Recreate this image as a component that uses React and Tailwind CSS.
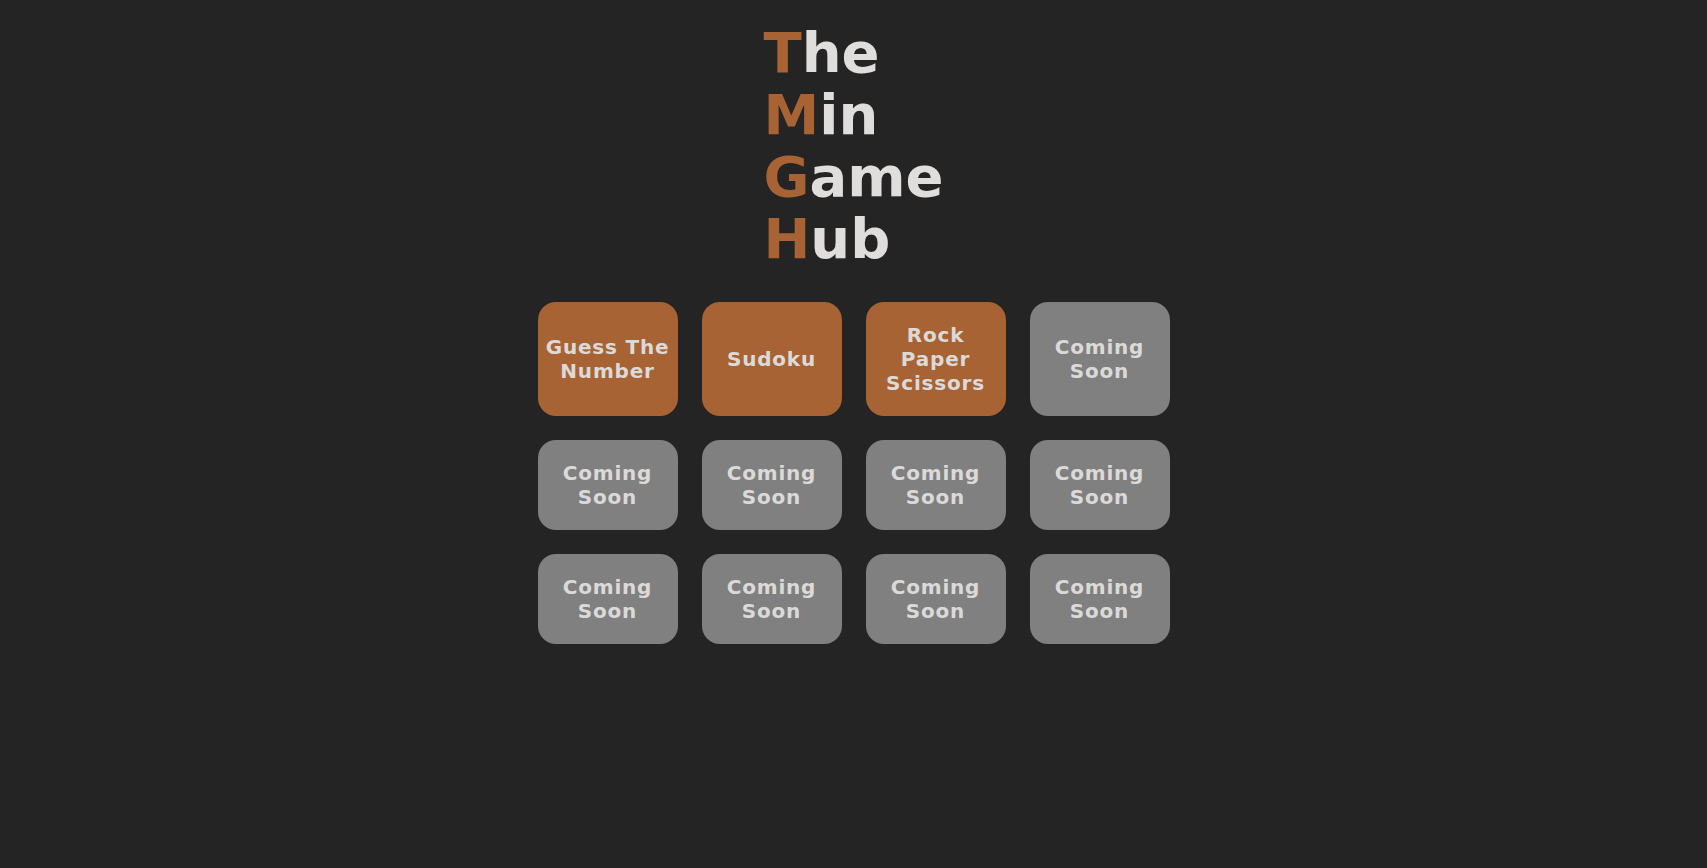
import React from 'react';

const games = [
    { name: "Guess The Number", live: true },
    { name: "Sudoku", live: true },
    { name: "Rock Paper Scissors", live: true },
    ...Array.from({ length: 9 }, () => ({ name: "Coming Soon", live: false }))
];

const title = ["The", "Min", "Game", "Hub"];

const App = () => {
    return (
        <div className="min-h-screen bg-[#242424] flex flex-col items-center pt-[22px] font-['DejaVu_Sans',sans-serif]">
            {/* Title */}
            <h1 className="flex flex-col text-[56px] leading-[62px] font-bold text-[#e0dedd]">
                {title.map((word) => (
                    <span key={word}>
                        <span className="text-[#a86334]">{word[0]}</span>
                        {word.slice(1)}
                    </span>
                ))}
            </h1>

            {/* Game grid */}
            <div className="grid grid-cols-[repeat(4,140px)] gap-6 mt-[32px]">
                {games.map((game, i) => (
                    <button
                        key={i}
                        className={`rounded-[18px] px-1 py-[21px] flex items-center justify-center text-center text-[20px] leading-[24px] font-bold text-[#dcdad8] tracking-[0.8px] ${game.live ? 'bg-[#a86334]' : 'bg-[#808080]'}`}
                    >
                        {game.name}
                    </button>
                ))}
            </div>
        </div>
    );
};

export default App;
